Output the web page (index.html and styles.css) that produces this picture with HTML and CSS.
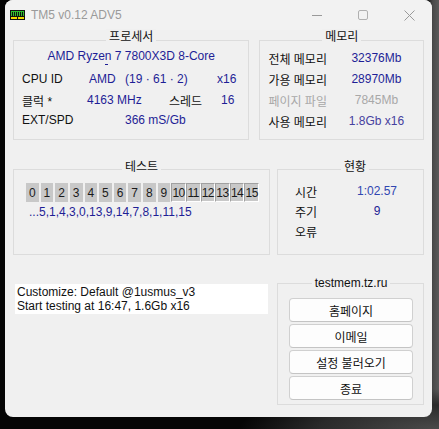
FILE: index.html
```html
<!DOCTYPE html>
<html lang="ko">
<head>
<meta charset="utf-8">
<title>TM5 v0.12 ADV5</title>
<link rel="stylesheet" href="styles.css">
</head>
<body>
<div class="window">
  <div class="titlebar">
    <svg class="app-icon" width="15" height="10" viewBox="0 0 15 10">
      <rect x="0" y="0" width="15" height="7" fill="#111"/>
      <rect x="1" y="1" width="13" height="5" fill="#2fbf2f"/>
      <rect x="2" y="2" width="1" height="4" fill="#111"/>
      <rect x="4" y="2" width="1" height="4" fill="#111"/>
      <rect x="6" y="2" width="1" height="4" fill="#111"/>
      <rect x="8" y="2" width="1" height="4" fill="#111"/>
      <rect x="10" y="2" width="1" height="4" fill="#111"/>
      <rect x="12" y="2" width="1" height="4" fill="#111"/>
      <rect x="0" y="7" width="15" height="3" fill="#111"/>
      <rect x="1" y="7" width="6" height="2" fill="#f0dc00"/>
      <rect x="8" y="7" width="6" height="2" fill="#f0dc00"/>
    </svg>
    <span class="title">TM5 v0.12 ADV5</span>
    <div class="controls">
      <span class="ctl"><svg width="10" height="10" viewBox="0 0 10 10"><path d="M0 5.5H10" stroke="#9a9a9a" stroke-width="1"/></svg></span>
      <span class="ctl"><svg width="10" height="10" viewBox="0 0 10 10"><rect x="0.5" y="0.5" width="9" height="9" rx="1.5" fill="none" stroke="#b0b0b0" stroke-width="1"/></svg></span>
      <span class="ctl"><svg width="11" height="11" viewBox="0 0 11 11"><path d="M0.5 0.5L10.5 10.5M10.5 0.5L0.5 10.5" stroke="#9a9a9a" stroke-width="1"/></svg></span>
    </div>
  </div>

  <div class="content">
    <div class="row row-top">
      <section class="group cpu">
        <div class="gtitle">프로세서</div>
        <div class="cpu-name">AMD Ryzen 7 7800X3D 8-Core</div>
        <div class="line first">
          <span class="lbl c-id">CPU ID</span>
          <span class="val c-vendor">AMD</span>
          <span class="val c-sig">(19 · 61 · 2)</span>
          <span class="val">x16</span>
        </div>
        <div class="line">
          <span class="lbl c-clk">클럭 *</span>
          <span class="val c-mhz">4163 MHz</span>
          <span class="lbl c-thr">스레드</span>
          <span class="val">16</span>
        </div>
        <div class="line last">
          <span class="lbl c-ext">EXT/SPD</span>
          <span class="val">366 mS/Gb</span>
        </div>
      </section>

      <section class="group mem">
        <div class="gtitle">메모리</div>
        <div class="line first">
          <span class="lbl m-lbl">전체 메모리</span>
          <span class="val m-val">32376Mb</span>
        </div>
        <div class="line">
          <span class="lbl m-lbl">가용 메모리</span>
          <span class="val m-val">28970Mb</span>
        </div>
        <div class="line dim">
          <span class="m-lbl">페이지 파일</span>
          <span class="m-val">7845Mb</span>
        </div>
        <div class="line">
          <span class="lbl m-lbl">사용 메모리</span>
          <span class="val alt m-val">1.8Gb x16</span>
        </div>
      </section>
    </div>

    <div class="row row-mid">
      <section class="group test">
        <div class="gtitle">테스트</div>
        <div class="cells">
          <span class="cell">0</span><span class="cell">1</span><span class="cell">2</span><span class="cell">3</span>
          <span class="cell">4</span><span class="cell">5</span><span class="cell">6</span><span class="cell">7</span>
          <span class="cell">8</span><span class="cell">9</span>
          <span class="cell hi">10</span><span class="cell hi">11</span><span class="cell hi">12</span>
          <span class="cell hi">13</span><span class="cell hi">14</span><span class="cell hi">15</span>
        </div>
        <div class="seq">...5,1,4,3,0,13,9,14,7,8,1,11,15</div>
      </section>

      <section class="group status">
        <div class="gtitle">현황</div>
        <div class="line first">
          <span class="lbl s-lbl">시간</span>
          <span class="val time s-val">1:02.57</span>
        </div>
        <div class="line">
          <span class="lbl s-lbl">주기</span>
          <span class="val s-val">9</span>
        </div>
        <div class="line">
          <span class="lbl s-lbl">오류</span>
          <span class="val s-val"></span>
        </div>
      </section>
    </div>

    <div class="row row-bottom">
      <div class="log">
        <div>Customize: Default @1usmus_v3</div>
        <div>Start testing at 16:47, 1.6Gb x16</div>
      </div>
      <section class="group links">
        <div class="gtitle">testmem.tz.ru</div>
        <div class="buttons">
          <button class="btn">홈페이지</button>
          <button class="btn">이메일</button>
          <button class="btn">설정 불러오기</button>
          <button class="btn">종료</button>
        </div>
      </section>
    </div>
  </div>
</div>
</body>
</html>
```

FILE: styles.css
```css
* {
  box-sizing: border-box;
}

html,
body {
  margin: 0;
  height: 100%;
}

body {
  font-family: "Liberation Sans", "Noto Sans CJK KR", sans-serif;
  font-size: 12px;
  color: #111;
  background:
    radial-gradient(ellipse 200px 40px at 100% 100%, #4a4a4a 0, #2a2a2a 60%, rgba(0,0,0,0) 100%),
    linear-gradient(to right, #050505 0, #050505 97%, #4a4a4a 98.6%, #5a5a5a 100%);
  overflow: hidden;
}

.window {
  margin-left: 5px;
  width: 427px;
  height: 417px;
  background: #f0f0f0;
  border-radius: 8px;
  overflow: hidden;
}

/* title bar */
.titlebar {
  height: 30px;
  display: flex;
  align-items: center;
  padding-left: 5px;
  background: #f2f2f2;
}

.app-icon {
  display: block;
  flex: none;
  margin-top: -1px;
}

.title {
  margin-left: 6px;
  color: #9a9a9a;
  font-size: 12px;
}

.controls {
  margin-left: auto;
  display: flex;
  height: 30px;
}

.ctl {
  width: 46px;
  height: 30px;
  display: flex;
  align-items: center;
  justify-content: center;
}

.ctl svg {
  display: block;
}

/* body */
.content {
  padding: 10px 8px 0;
}

.row {
  display: flex;
}

.row-top {
  gap: 10px;
  height: 100px;
}

.row-mid {
  margin-top: 29px;
  gap: 7px;
  height: 86px;
}

.row-bottom {
  margin-top: 28px;
  height: 122px;
}

.group {
  border: 1px solid #dcdcdc;
}

.gtitle {
  width: fit-content;
  margin: -12px auto 0;
  padding: 0 3px;
  line-height: 16px;
  height: 16px;
  background: #f0f0f0;
  white-space: nowrap;
  color: #111;
}

.line {
  display: flex;
  align-items: center;
  height: 20px;
  margin-top: 1px;
  white-space: nowrap;
}

.lbl {
  color: #111;
}

.val {
  color: #1e1e96;
}

.val.alt {
  color: #46409e;
}

.val.time {
  color: #3046b0;
}

.dim {
  color: #a8a8a8;
}

/* processor */
.cpu {
  width: 237px;
  padding: 0 8px 9px;
  position: relative;
}

.cpu-name {
  height: 20px;
  line-height: 20px;
  margin-top: 1px;
  text-align: center;
  color: #1e1e96;
  position: relative;
}

.cpu-name::after {
  content: "";
  position: absolute;
  left: 83px;
  top: 18px;
  width: 3px;
  height: 1px;
  background: #1e1e96;
}

.cpu .line.first {
  margin-top: 3px;
}

.cpu .line.last {
  margin-top: 0;
}

.c-id { width: 67px; }
.c-vendor { width: 36px; }
.c-sig { width: 92px; }
.c-clk { width: 65px; }
.c-mhz { width: 82px; }
.c-thr { width: 52px; }
.c-ext { width: 103px; }

/* memory */
.mem {
  width: 165px;
  padding: 0 8px 0;
}

.mem .line.first {
  margin-top: 3px;
}

.m-lbl {
  width: 80px;
}

.m-val {
  width: 56px;
  text-align: center;
}

/* test */
.test {
  width: 257px;
  padding: 0 11px;
}

.test .gtitle {
  margin-top: -11px;
}

.cells {
  margin-top: 8px;
  display: grid;
  grid-template-columns: repeat(16, 14.625px);
  height: 19px;
}

.cell {
  height: 19px;
  margin: 0 1px;
  background: #c8c8c8;
  display: flex;
  align-items: center;
  justify-content: center;
  color: #1a1a1a;
  font-size: 12px;
  white-space: nowrap;
}

.cell.hi {
  margin: 0;
  border: 1px solid;
  border-color: #a0a0a0 #ffffff #ffffff #a0a0a0;
  letter-spacing: -0.6px;
}

.seq {
  margin-top: 2px;
  padding-left: 4px;
  line-height: 16px;
  color: #1e1e96;
  white-space: nowrap;
}

/* status */
.status {
  width: 147px;
  padding: 0 8px 0 17px;
}

.status .gtitle {
  margin-top: -11px;
}

.status .line {
  margin-top: 0;
}

.status .line.first {
  margin-top: 6px;
}

.s-lbl {
  width: 54px;
}

.s-val {
  width: 56px;
  text-align center;
  text-align: center;
}

/* log + links */
.log {
  margin: 1px 0 0 2px;
  width: 253px;
  height: 30px;
  padding: 1px 2px;
  background: #ffffff;
  line-height: 14px;
  color: #111;
  white-space: nowrap;
}

.links {
  margin-left: 9px;
  width: 147px;
  padding: 0 10px 0 11px;
}

.links .gtitle {
  margin-top: -9px;
}

.buttons {
  margin-top: 7px;
  display: flex;
  flex-direction: column;
  gap: 2px;
}

.btn {
  height: 24px;
  padding: 0;
  background: #fdfdfd;
  border: 1px solid #d0d0d0;
  border-bottom-color: #c4c4c4;
  border-radius: 4px;
  font-family: "Liberation Sans", "Noto Sans CJK KR", sans-serif;
  font-size: 12px;
  color: #111;
}
```
